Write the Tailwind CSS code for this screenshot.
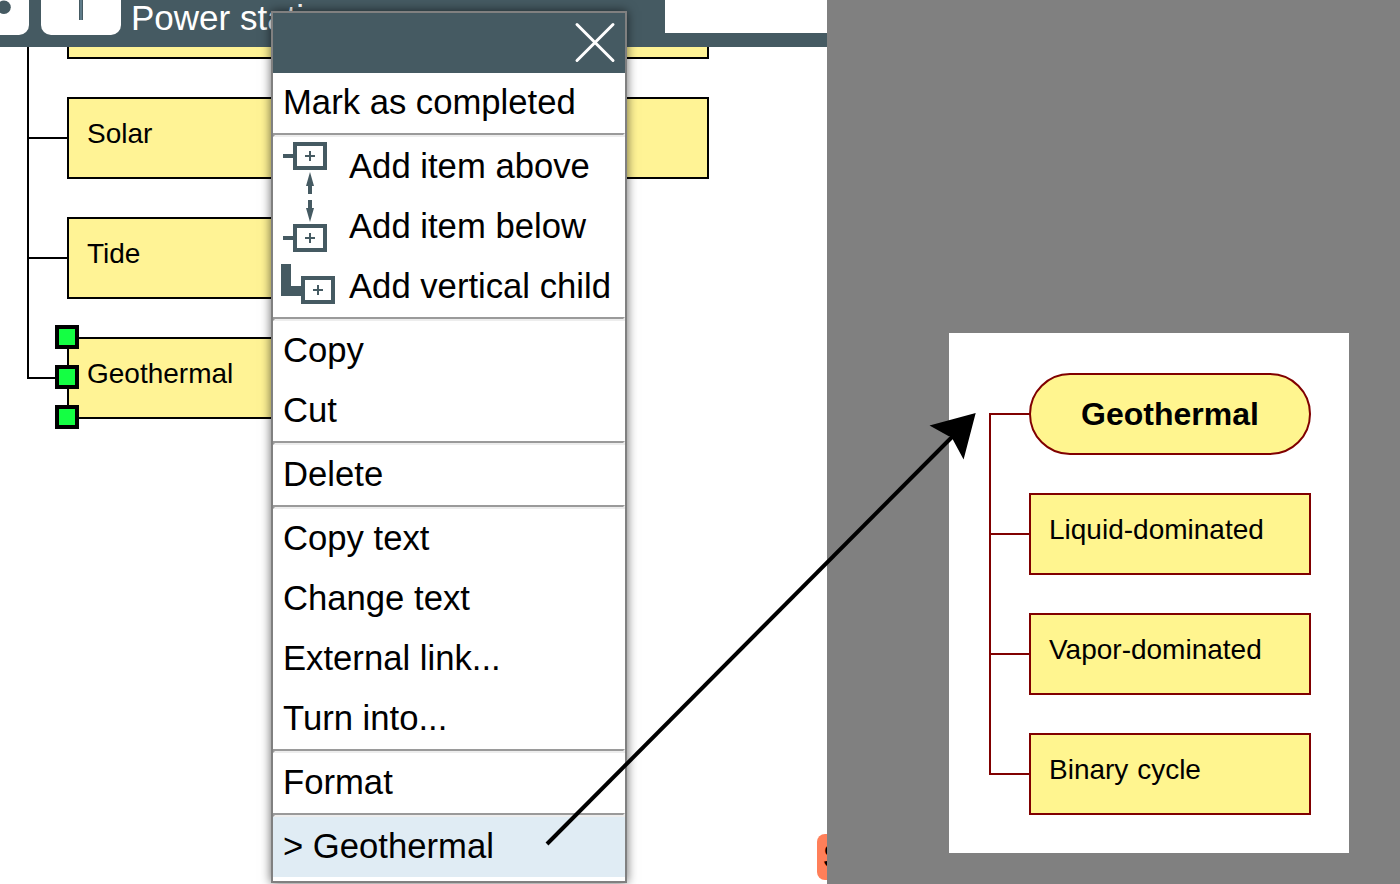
<!DOCTYPE html>
<html lang="en">
<head>
<meta charset="utf-8">
<title>Power stations</title>
<script src="https://cdn.jsdelivr.net/npm/@tailwindcss/browser@4"></script>
</head>
<body class="relative flex h-[884px] w-[1400px] overflow-hidden bg-[#808080] font-['Liberation_Sans',Arial,sans-serif] text-black">

<!-- Editor -->
<main class="relative flex h-[884px] w-[827px] flex-col overflow-hidden bg-white">
  <header class="relative z-10 flex h-[47px] shrink-0 items-start bg-[#455a62]">
    <div class="h-[35px] w-[29px] rounded-br-[10px] bg-white">
      <svg class="block h-[35px] w-[29px]" viewBox="0 0 29 35"><circle cx="4" cy="7.3" r="6.8" fill="#455a62"/></svg>
    </div>
    <div class="ml-3 h-[35px] w-20 rounded-b-[10px] bg-white">
      <svg class="block h-[35px] w-20" viewBox="0 0 80 35"><path d="M38 0h4v20h-4z" fill="#5f7c8a"/><path d="M38 0h1v20h-1zM41 0h1v20h-1z" fill="#455a62"/></svg>
    </div>
    <h1 class="ml-[10px] h-[35px] text-[35px] leading-[35px] whitespace-nowrap text-white">Power stations</h1>
    <div class="ml-auto h-[33px] w-[162px] bg-white"></div>
  </header>

  <!-- Diagram canvas -->
  <section class="absolute inset-0 text-[28px] leading-[32px]">
    <svg class="absolute inset-0 h-full w-full" viewBox="0 0 827 884" fill="none" stroke="#000" stroke-width="2"><path d="M28 0V378H68M28 138H68M28 258H68"/></svg>
    <div class="absolute top-[-23px] left-[67px] h-[82px] w-[642px] border-2 border-black bg-[#fff395]"></div>
    <div class="absolute top-[97px] left-[67px] h-[82px] w-[642px] border-2 border-black bg-[#fff395] px-[18px] pt-[19px]">Solar</div>
    <div class="absolute top-[217px] left-[67px] h-[82px] w-[282px] border-2 border-black bg-[#fff395] px-[18px] pt-[19px]">Tide</div>
    <div class="absolute top-[337px] left-[67px] h-[82px] w-[282px] border-2 border-black bg-[#fff395] px-[18px] pt-[19px]">Geothermal</div>
    <div class="absolute top-[325px] left-[55px] size-6 border-4 border-black bg-[#14ff43]"></div>
    <div class="absolute top-[365px] left-[55px] size-6 border-4 border-black bg-[#14ff43]"></div>
    <div class="absolute top-[405px] left-[55px] size-6 border-4 border-black bg-[#14ff43]"></div>
  </section>
  <div class="absolute top-[834px] left-[817px] h-[46px] w-20 rounded-[8px] bg-[#ff7f59] pl-[6px] text-[35px] leading-[44px] font-bold">S</div>
</main>

<!-- Context menu -->
<nav class="absolute top-[11px] left-[271px] z-20 flex h-[872px] w-[356px] flex-col border-2 border-[#808080] bg-white text-[34.667px] leading-[58px] whitespace-nowrap shadow-[0_0_10px_rgba(0,0,0,0.6)]">
  <div class="flex h-[60px] shrink-0 justify-end bg-[#455a62] pt-[9px] pr-[9px]">
    <svg class="size-[42px]" viewBox="0 0 42 42" fill="none" stroke="#fff" stroke-width="3" stroke-linecap="round"><path d="M3 2.5 39 38.5M39 2.5 3 38.5"/></svg>
  </div>
  <div class="h-[60px] shrink-0 px-[10px]">Mark as completed</div>
  <div class="h-1 shrink-0 border-2 border-t-[#9a9a9a] border-r-[#ededed] border-b-[#ededed] border-l-[#9a9a9a]"></div>
  <div class="flex h-[180px] shrink-0">
    <svg class="h-[180px] w-[76px] shrink-0" viewBox="273 137 76 180" fill="none" stroke="#455a62">
      <g stroke-width="4"><path d="M295 144h30v24h-30zM283 156h11M295 226h30v24h-30zM283 238h11M303 278h30v24h-30z"/></g>
      <path d="M305 156h10M310 151v10M305 238h10M310 233v10M313 290h10M318 285v10" stroke-width="2"/>
      <path d="M310 172l4 14h-2v8h-4v-8h-2zM310 222l4-14h-2v-8h-4v8h-2zM281 264h10v22h11v10h-21z" fill="#455a62" stroke="none"/>
    </svg>
    <div class="flex flex-col">
      <div class="h-[60px]">Add item above</div>
      <div class="h-[60px]">Add item below</div>
      <div class="h-[60px]">Add vertical child</div>
    </div>
  </div>
  <div class="h-1 shrink-0 border-2 border-t-[#9a9a9a] border-r-[#ededed] border-b-[#ededed] border-l-[#9a9a9a]"></div>
  <div class="h-[60px] shrink-0 px-[10px]">Copy</div>
  <div class="h-[60px] shrink-0 px-[10px]">Cut</div>
  <div class="h-1 shrink-0 border-2 border-t-[#9a9a9a] border-r-[#ededed] border-b-[#ededed] border-l-[#9a9a9a]"></div>
  <div class="h-[60px] shrink-0 px-[10px]">Delete</div>
  <div class="h-1 shrink-0 border-2 border-t-[#9a9a9a] border-r-[#ededed] border-b-[#ededed] border-l-[#9a9a9a]"></div>
  <div class="h-[60px] shrink-0 px-[10px]">Copy text</div>
  <div class="h-[60px] shrink-0 px-[10px]">Change text</div>
  <div class="h-[60px] shrink-0 px-[10px]">External link...</div>
  <div class="h-[60px] shrink-0 px-[10px]">Turn into...</div>
  <div class="h-1 shrink-0 border-2 border-t-[#9a9a9a] border-r-[#ededed] border-b-[#ededed] border-l-[#9a9a9a]"></div>
  <div class="h-[60px] shrink-0 px-[10px]">Format</div>
  <div class="h-1 shrink-0 border-2 border-t-[#9a9a9a] border-r-[#ededed] border-b-[#ededed] border-l-[#9a9a9a]"></div>
  <div class="h-[60px] shrink-0 bg-[#e0ecf4] px-[10px]">&gt; Geothermal</div>
</nav>

<!-- Linked diagram -->
<aside class="relative mt-[333px] ml-[122px] flex h-[520px] w-[400px] flex-col gap-[38px] bg-white pt-10 pl-20 text-[28px] leading-[32px]">
  <svg class="absolute inset-0 h-full w-full" viewBox="0 0 400 520" fill="none" stroke="#800000" stroke-width="2"><path d="M82 81H41V441H82M41 201H82M41 321H82"/></svg>
  <div class="relative h-[82px] w-[282px] shrink-0 rounded-[41px] border-2 border-[#800000] bg-[#fff58f] text-center text-[32px] leading-[78px] font-bold">Geothermal</div>
  <div class="relative h-[82px] w-[282px] shrink-0 border-2 border-[#800000] bg-[#fff58f] px-[18px] pt-[19px]">Liquid-dominated</div>
  <div class="relative h-[82px] w-[282px] shrink-0 border-2 border-[#800000] bg-[#fff58f] px-[18px] pt-[19px]">Vapor-dominated</div>
  <div class="relative h-[82px] w-[282px] shrink-0 border-2 border-[#800000] bg-[#fff58f] px-[18px] pt-[19px] [word-spacing:1px]">Binary cycle</div>
</aside>

<!-- Arrow from the menu item to the linked diagram -->
<svg class="pointer-events-none absolute inset-0 z-30 h-[884px] w-[1400px]" viewBox="0 0 1400 884"><path d="M547 844 953 436" stroke="#000" stroke-width="4"/><path d="M975.7 413 963.6 459.6 952 438 929.5 425.5z"/></svg>
</body>
</html>
